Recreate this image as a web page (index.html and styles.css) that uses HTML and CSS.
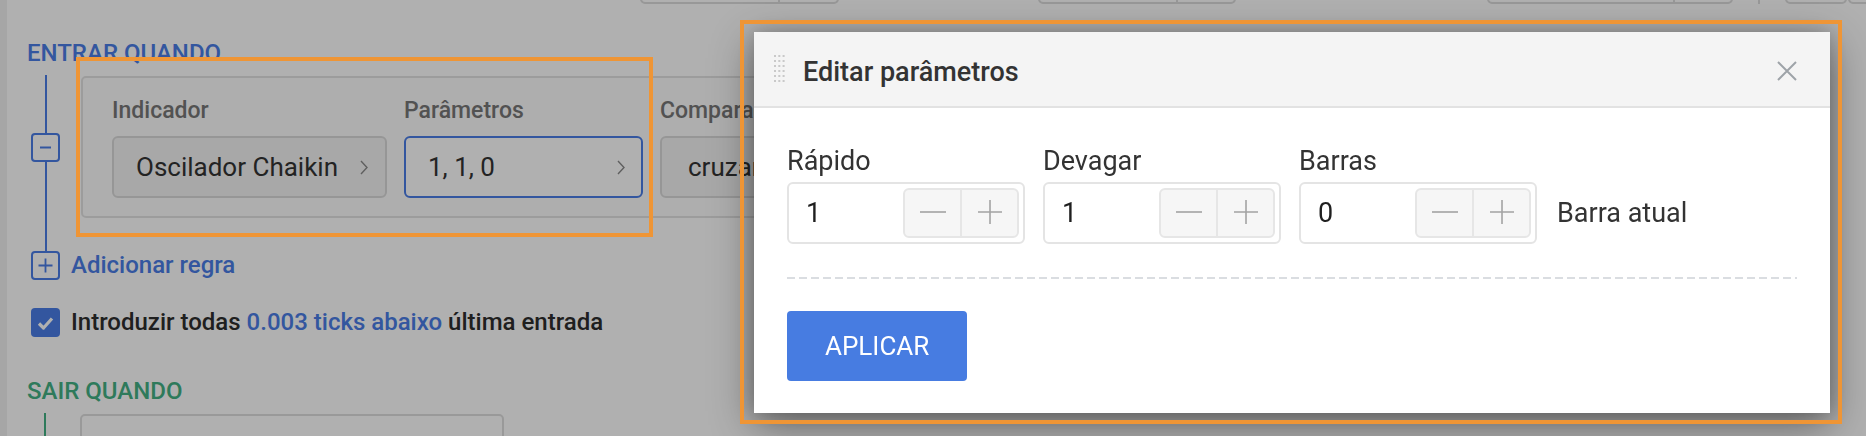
FILE: index.html
```html
<!DOCTYPE html>
<html lang="pt">
<head>
<meta charset="utf-8">
<title>Editar parâmetros</title>
<link rel="stylesheet" href="styles.css">
</head>
<body>
<div class="app">
  <div class="strip"></div>
  <main class="main">
    <div class="top-row">
      <div class="tbox tb1"><span class="tseg tseg-wide"></span><span class="tseg"></span></div>
      <div class="tbox tb2"><span class="tseg tseg-wide"></span><span class="tseg"></span></div>
      <div class="tbox tb3"><span class="tseg tseg-wide"></span><span class="tseg"></span></div>
      <div class="tsep"></div>
      <div class="tbox tb4"></div>
      <div class="tbox tb5"></div>
    </div>

    <h2 class="section-title enter">ENTRAR QUANDO</h2>

    <div class="rule-row">
      <div class="rail">
        <span class="seg seg-top"></span>
        <span class="rail-btn"><svg width="13" height="13" viewBox="0 0 13 13"><path d="M1 6.5H12" stroke="currentColor" stroke-width="2"/></svg></span>
        <span class="seg seg-bottom"></span>
      </div>
      <div class="rule-card">
        <div class="field f-ind">
          <div class="field-label">Indicador</div>
          <div class="select sel-grey"><span>Oscilador Chaikin</span><svg class="chev" width="8" height="15" viewBox="0 0 8 15"><path d="M1 1L7 7.5L1 14" fill="none" stroke="currentColor" stroke-width="1.4"/></svg></div>
        </div>
        <div class="field f-par">
          <div class="field-label">Parâmetros</div>
          <div class="select sel-active"><span>1, 1, 0</span><svg class="chev" width="8" height="15" viewBox="0 0 8 15"><path d="M1 1L7 7.5L1 14" fill="none" stroke="currentColor" stroke-width="1.4"/></svg></div>
        </div>
        <div class="field f-cmp">
          <div class="field-label">Comparação</div>
          <div class="select sel-grey"><span>cruzamento</span></div>
        </div>
      </div>
    </div>

    <div class="add-row">
      <span class="rail-btn"><svg width="15" height="15" viewBox="0 0 15 15"><path d="M0.5 7.5H14.5M7.5 0.5V14.5" stroke="currentColor" stroke-width="1.8"/></svg></span>
      <span class="add-text">Adicionar regra</span>
    </div>

    <div class="check-row">
      <span class="checkbox"><svg width="17" height="14" viewBox="0 0 17 14"><path d="M2 7.5L6.5 12L15 2.5" fill="none" stroke="#fff" stroke-width="3.2" stroke-linejoin="round"/></svg></span>
      <span class="check-text">Introduzir todas <span class="link">0.003 ticks abaixo</span> última entrada</span>
    </div>

    <h2 class="section-title exit">SAIR QUANDO</h2>

    <div class="exit-row">
      <span class="exit-line"></span>
      <div class="exit-box"></div>
    </div>
  </main>
</div>

<div class="overlay"></div>

<div class="note note-left"></div>

<section class="modal">
  <header class="modal-head">
    <svg class="grip" width="11" height="27" viewBox="0 0 11 27">
      <g fill="#c9c9c9">
        <rect x="0" y="0" width="2" height="2"/><rect x="4.3" y="0" width="2" height="2"/><rect x="8.6" y="0" width="2" height="2"/>
        <rect x="0" y="5" width="2" height="2"/><rect x="4.3" y="5" width="2" height="2"/><rect x="8.6" y="5" width="2" height="2"/>
        <rect x="0" y="10" width="2" height="2"/><rect x="4.3" y="10" width="2" height="2"/><rect x="8.6" y="10" width="2" height="2"/>
        <rect x="0" y="15" width="2" height="2"/><rect x="4.3" y="15" width="2" height="2"/><rect x="8.6" y="15" width="2" height="2"/>
        <rect x="0" y="20" width="2" height="2"/><rect x="4.3" y="20" width="2" height="2"/><rect x="8.6" y="20" width="2" height="2"/>
        <rect x="0" y="25" width="2" height="2"/><rect x="4.3" y="25" width="2" height="2"/><rect x="8.6" y="25" width="2" height="2"/>
      </g>
    </svg>
    <h1 class="modal-title">Editar parâmetros</h1>
    <svg class="close" width="20" height="20" viewBox="0 0 20 20"><path d="M1 1L19 19M19 1L1 19" stroke="#9ea3a8" stroke-width="2"/></svg>
  </header>
  <div class="modal-body">
    <div class="params">
      <div class="param">
        <div class="param-label">Rápido</div>
        <div class="num-input">
          <span class="num-value">1</span>
          <span class="stepper">
            <span class="step"><svg width="26" height="4" viewBox="0 0 26 4"><path d="M0 2H26" stroke="#a3a3a3" stroke-width="1.6"/></svg></span>
            <span class="step step-plus"><svg width="24" height="24" viewBox="0 0 24 24"><path d="M0 12H24M12 0V24" stroke="#a3a3a3" stroke-width="1.6"/></svg></span>
          </span>
        </div>
      </div>
      <div class="param">
        <div class="param-label">Devagar</div>
        <div class="num-input">
          <span class="num-value">1</span>
          <span class="stepper">
            <span class="step"><svg width="26" height="4" viewBox="0 0 26 4"><path d="M0 2H26" stroke="#a3a3a3" stroke-width="1.6"/></svg></span>
            <span class="step step-plus"><svg width="24" height="24" viewBox="0 0 24 24"><path d="M0 12H24M12 0V24" stroke="#a3a3a3" stroke-width="1.6"/></svg></span>
          </span>
        </div>
      </div>
      <div class="param">
        <div class="param-label">Barras</div>
        <div class="num-input">
          <span class="num-value">0</span>
          <span class="stepper">
            <span class="step"><svg width="26" height="4" viewBox="0 0 26 4"><path d="M0 2H26" stroke="#a3a3a3" stroke-width="1.6"/></svg></span>
            <span class="step step-plus"><svg width="24" height="24" viewBox="0 0 24 24"><path d="M0 12H24M12 0V24" stroke="#a3a3a3" stroke-width="1.6"/></svg></span>
          </span>
        </div>
      </div>
      <div class="param-note">Barra atual</div>
    </div>
    <div class="dash"></div>
    <button class="apply" type="button">APLICAR</button>
  </div>
</section>

<div class="note note-modal"></div>
</body>
</html>
```

FILE: styles.css
```css
* { box-sizing: border-box; }

html, body {
  margin: 0;
  padding: 0;
  width: 1866px;
  height: 436px;
  overflow: hidden;
  background: #ffffff;
  font-family: Roboto, "Liberation Sans", Arial, sans-serif;
  color: #333333;
}

.app {
  display: flex;
  height: 436px;
  overflow: hidden;
}

.strip {
  width: 7px;
  flex: none;
  background: #f1f1f1;
}

.main {
  flex: 1;
  padding-left: 24px;
  display: flex;
  flex-direction: column;
  align-items: flex-start;
  overflow: hidden;
}

/* bottom edges of the controls above the fold */
.top-row {
  display: flex;
  align-items: flex-end;
  height: 4px;
  flex: none;
  overflow: hidden;
  margin-left: -24px;
  width: 1859px;
}
.tbox {
  height: 40px;
  flex: none;
  display: flex;
  border: 2px solid #dcdcdc;
  border-radius: 5px;
}
.tseg { flex: 1; }
.tseg + .tseg { border-left: 2px solid #dcdcdc; }
.tseg-wide { flex: none; }
.tb1 { margin-left: 633px; width: 199px; }
.tb1 .tseg-wide { width: 136px; }
.tb2 { margin-left: 199px; width: 198px; }
.tb2 .tseg-wide { width: 136px; }
.tb3 { margin-left: 251px; width: 246px; }
.tb3 .tseg-wide { width: 184px; }
.tsep { margin-left: 25px; width: 2px; height: 40px; background: #dcdcdc; flex: none; }
.tb4 { margin-left: 25px; width: 62px; }
.tb5 { margin-left: 1px; width: 30px; }

.section-title {
  margin: 0;
  font-size: 24px;
  line-height: 28px;
  font-weight: 500;
  margin-left: -4px;
  flex: none;
}
.section-title.enter { color: #4a7de6; margin-top: 35px; }
.section-title.exit { color: #43b184; margin-top: 40px; }

.rule-row {
  display: flex;
  margin-top: 8px;
  flex: none;
}

.rail {
  width: 29px;
  display: flex;
  flex-direction: column;
  align-items: center;
  flex: none;
}
.seg {
  width: 2px;
  background: #4a7de6;
}
.seg-top { height: 58px; }
.seg-bottom { flex: 1; }

.rail-btn {
  width: 29px;
  height: 29px;
  flex: none;
  border: 2px solid #4a7de6;
  border-radius: 4px;
  color: #4a7de6;
  display: flex;
  align-items: center;
  justify-content: center;
  background: #ffffff;
}

.rule-card {
  margin: 1px 0 33px 21px;
  width: 1000px;
  height: 142px;
  border: 2px solid #e3e3e3;
  border-radius: 5px;
  background: #fcfcfc;
  padding: 19px 0 18px 29px;
  display: flex;
  gap: 17px;
}

.field { display: flex; flex-direction: column; }
.f-ind { width: 275px; }
.f-par { width: 239px; }
.f-cmp { width: 260px; }

.field-label {
  font-size: 23px;
  line-height: 27px;
  font-weight: 500;
  color: #777777;
  margin-bottom: 12px;
}

.select {
  height: 62px;
  border-radius: 6px;
  border: 2px solid #dadada;
  display: flex;
  align-items: center;
  justify-content: space-between;
  padding: 0 17px 0 22px;
  font-size: 26px;
  color: #333333;
}
.f-cmp .select { padding-left: 26px; }
.sel-grey { background: #f4f4f4; }
.sel-active { background: #ffffff; border-color: #4a7de6; padding-right: 16px; }
.chev { color: #8a8a8a; flex: none; }

.add-row {
  display: flex;
  align-items: center;
  gap: 11px;
  height: 29px;
  flex: none;
}
.add-text {
  font-size: 24px;
  font-weight: 500;
  color: #4a7de6;
  line-height: 29px;
}

.check-row {
  display: flex;
  align-items: center;
  gap: 11px;
  height: 29px;
  margin-top: 28px;
  flex: none;
}
.checkbox {
  width: 29px;
  height: 29px;
  border-radius: 4px;
  background: #4a7de6;
  display: flex;
  align-items: center;
  justify-content: center;
}
.check-text {
  font-size: 24px;
  font-weight: 500;
  line-height: 29px;
  color: #2e2e2e;
}
.link { color: #4a7de6; }

.exit-row {
  display: flex;
  margin-top: 8px;
  height: 40px;
  flex: none;
}
.exit-line {
  width: 2px;
  margin-left: 13px;
  background: #43b184;
}
.exit-box {
  margin-left: 34px;
  margin-top: 1px;
  width: 424px;
  height: 60px;
  border: 2px solid #dedede;
  border-radius: 5px;
}

/* dim layer */
.overlay {
  position: fixed;
  inset: 0;
  background: rgba(0, 0, 0, 0.31);
}

/* annotation outlines */
.note {
  position: absolute;
  border: 4px solid #ef9535;
  pointer-events: none;
}
.note-left { left: 76px; top: 57px; width: 577px; height: 180px; }
.note-modal { left: 740px; top: 20px; width: 1102px; height: 404px; }

/* dialog */
.modal {
  position: absolute;
  left: 754px;
  top: 32px;
  width: 1076px;
  background: #ffffff;
  box-shadow: 0 12px 40px rgba(0, 0, 0, 0.45), 0 0 18px rgba(0, 0, 0, 0.18);
}

.modal-head {
  display: flex;
  align-items: center;
  background: #f4f4f4;
  border-bottom: 2px solid #e2e2e2;
  padding: 23px 33px 18px 20px;
}
.grip { flex: none; margin-bottom: 6px; }
.modal-title {
  margin: 0 0 0 18px;
  font-size: 27px;
  line-height: 32px;
  font-weight: 500;
  color: #333333;
}
.close { margin-left: auto; flex: none; margin-bottom: 1px; }

.modal-body {
  padding: 37px 33px 32px;
}

.params {
  display: flex;
  align-items: flex-end;
  gap: 18px;
}
.param { width: 238px; }
.param-label {
  font-size: 27px;
  line-height: 32px;
  color: #333333;
  margin-bottom: 5px;
}
.num-input {
  height: 62px;
  border: 2px solid #e4e4e4;
  border-radius: 6px;
  display: flex;
  align-items: center;
  padding: 0 4px 0 17px;
}
.num-value {
  flex: 1;
  font-size: 27px;
  line-height: 32px;
  color: #1f1f1f;
}
.stepper {
  width: 116px;
  height: 50px;
  border: 2px solid #e6e6e6;
  border-radius: 6px;
  background: #f6f6f6;
  display: flex;
}
.step {
  flex: 1;
  display: flex;
  align-items: center;
  justify-content: center;
}
.step svg { margin-top: -3px; }
.step-plus { border-left: 2px solid #e6e6e6; }

.param-note {
  height: 62px;
  display: flex;
  align-items: center;
  margin-left: 2px;
  font-size: 27px;
  color: #333333;
}

.dash {
  height: 2px;
  margin: 33px 0 32px;
  background: repeating-linear-gradient(90deg, #dadde1 0 8px, transparent 8px 12px);
}

.apply {
  height: 70px;
  padding: 0 38px;
  border: none;
  border-radius: 4px;
  background: #477ce1;
  color: #ffffff;
  font-family: Roboto, "Liberation Sans", Arial, sans-serif;
  font-size: 26px;
  font-weight: 400;
  display: block;
}
```
